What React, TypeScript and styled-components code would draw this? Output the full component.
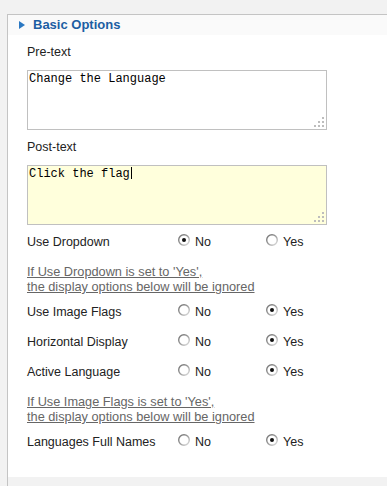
import styled, { createGlobalStyle } from 'styled-components';

const GlobalStyle = createGlobalStyle`
  html, body {
    margin: 0;
    padding: 0;
    background: #f2f2f2;
    overflow: hidden;
  }
  body {
    font-family: 'Liberation Sans', Arial, sans-serif;
  }
`;

type Choice = 'no' | 'yes';

const rowsTop: { label: string; value: Choice }[] = [
  { label: 'Use Dropdown', value: 'no' },
];

const rowsMiddle: { label: string; value: Choice }[] = [
  { label: 'Use Image Flags', value: 'yes' },
  { label: 'Horizontal Display', value: 'yes' },
  { label: 'Active Language', value: 'yes' },
];

const rowsBottom: { label: string; value: Choice }[] = [
  { label: 'Languages Full Names', value: 'yes' },
];

const Radio = ({ checked }: { checked: boolean }) => (
  <RadioIcon width="12" height="12" viewBox="0 0 12 12">
    <defs>
      <linearGradient id="radioRing" x1="0" y1="0" x2="1" y2="1">
        <stop offset="0" stopColor="#6e6e6e" />
        <stop offset="0.5" stopColor="#9a9a9a" />
        <stop offset="1" stopColor="#e4e4e4" />
      </linearGradient>
    </defs>
    <circle cx="6" cy="6" r="5.3" fill="#fff" stroke="url(#radioRing)" strokeWidth="1.4" />
    {checked && <circle cx="6" cy="6" r="2" fill="#111" />}
  </RadioIcon>
);

const OptionRow = ({ label, value }: { label: string; value: Choice }) => (
  <Row>
    <RowLabel>{label}</RowLabel>
    <Option $width={88}>
      <Radio checked={value === 'no'} />
      <span>No</span>
    </Option>
    <Option>
      <Radio checked={value === 'yes'} />
      <span>Yes</span>
    </Option>
  </Row>
);

const Grip = () => (
  <GripIcon width="10" height="10" viewBox="0 0 10 10">
    <rect x="8" y="0" width="2" height="2" fill="#bdbdbd" />
    <rect x="4" y="4" width="2" height="2" fill="#bdbdbd" />
    <rect x="8" y="4" width="2" height="2" fill="#bdbdbd" />
    <rect x="0" y="8" width="2" height="2" fill="#bdbdbd" />
    <rect x="4" y="8" width="2" height="2" fill="#bdbdbd" />
    <rect x="8" y="8" width="2" height="2" fill="#bdbdbd" />
  </GripIcon>
);

const App = () => {
  return (
    <>
      <GlobalStyle />
      <Page>
        <Panel>
          <Header>
            <Arrow width="6" height="8" viewBox="0 0 6 8">
              <path d="M0 0 L6 4 L0 8 Z" fill="#2b78c2" />
            </Arrow>
            <Title>Basic Options</Title>
          </Header>
          <Content>
            <FieldLabel>Pre-text</FieldLabel>
            <TextBox>
              Change the Language
              <Grip />
            </TextBox>
            <FieldLabel>Post-text</FieldLabel>
            <TextBox $focused>
              Click the flag<Caret />
              <Grip />
            </TextBox>
            <Options>
              {rowsTop.map((r) => (
                <OptionRow key={r.label} {...r} />
              ))}
              <Note>
                If Use Dropdown is set to 'Yes',
                <br />
                the display options below will be ignored
              </Note>
              {rowsMiddle.map((r) => (
                <OptionRow key={r.label} {...r} />
              ))}
              <Note>
                If Use Image Flags is set to 'Yes',
                <br />
                the display options below will be ignored
              </Note>
              {rowsBottom.map((r) => (
                <OptionRow key={r.label} {...r} />
              ))}
            </Options>
          </Content>
          <Footer />
        </Panel>
      </Page>
    </>
  );
};

const Page = styled.div`
  box-sizing: border-box;
  min-height: 486px;
  padding: 14px 0 0 7px;
`;

const Panel = styled.div`
  border-top: 1px solid #c4c4c4;
  border-left: 1px solid #c4c4c4;
  background: #fff;
`;

const Header = styled.div`
  display: flex;
  align-items: center;
  gap: 8px;
  height: 20px;
  padding-left: 11px;
  background: #fafafa;
`;

const Arrow = styled.svg`
  display: block;
`;

const Title = styled.div`
  font-size: 13px;
  font-weight: bold;
  line-height: 20px;
  color: #1c5ea3;
`;

const Content = styled.div`
  padding: 0 0 20px 19px;
  font-size: 12.5px;
  color: #222;
`;

const FieldLabel = styled.div`
  line-height: 16px;
  margin: 9px 0 10px;
`;

const TextBox = styled.div<{ $focused?: boolean }>`
  position: relative;
  box-sizing: border-box;
  width: 300px;
  height: 60px;
  padding: 1px;
  border: 1px solid #c0c0c0;
  background: ${(p) => (p.$focused ? '#ffffdc' : '#fff')};
  font-family: 'Liberation Mono', 'Courier New', monospace;
  font-size: 12px;
  line-height: 14px;
  color: #000;
  white-space: pre;
`;

const Caret = styled.span`
  display: inline-block;
  width: 1px;
  height: 12px;
  margin-left: 1px;
  vertical-align: -2px;
  background: #000;
`;

const GripIcon = styled.svg`
  position: absolute;
  right: 2px;
  bottom: 2px;
  display: block;
`;

const Options = styled.div`
  padding-top: 2px;
`;

const Row = styled.div`
  box-sizing: border-box;
  display: flex;
  align-items: flex-start;
  height: 30px;
  padding-top: 7px;
  line-height: 16px;
`;

const RowLabel = styled.div`
  width: 151px;
`;

const Option = styled.div<{ $width?: number }>`
  display: flex;
  align-items: flex-start;
  gap: 5px;
  width: ${(p) => (p.$width ? `${p.$width}px` : 'auto')};
`;

const RadioIcon = styled.svg`
  display: block;
  flex-shrink: 0;
`;

const Note = styled.div`
  margin: 7px 0 3px;
  font-size: 12.75px;
  line-height: 15px;
  color: #666;
  text-decoration: underline;
`;

const Footer = styled.div`
  height: 12px;
  background: #f2f2f2;
`;

export default App;
